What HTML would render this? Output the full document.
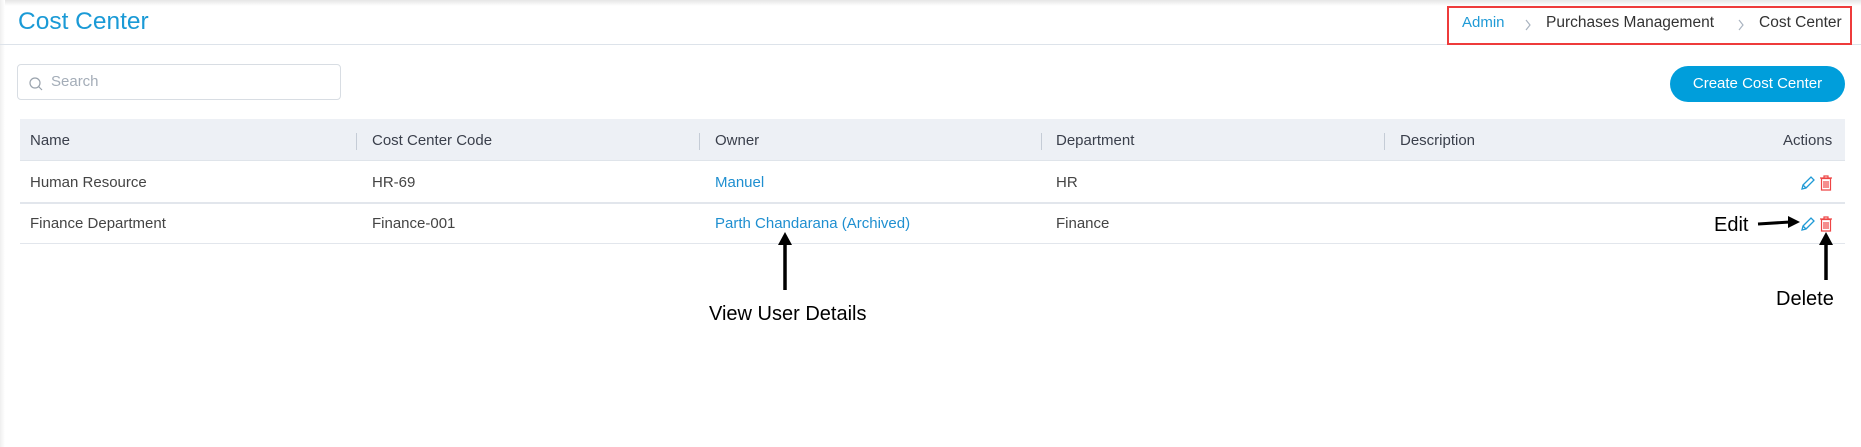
<!DOCTYPE html>
<html><head><meta charset="utf-8"><style>
*{margin:0;padding:0;box-sizing:border-box}
body{width:1861px;height:447px;background:#fff;font-family:"Liberation Sans",sans-serif;position:relative;overflow:hidden;color:#3a3f4b}
.a{position:absolute;white-space:nowrap}
.topsh{position:absolute;left:0;top:0;width:1861px;height:6px;background:linear-gradient(#e6e6e6,#fff)}
.leftsh{position:absolute;left:0;top:0;width:5px;height:447px;background:linear-gradient(90deg,#efefef,#fff)}
.th{font-size:15px;color:#3a3f4b}
.td{font-size:15px;color:#444}
.link{color:#1f8fd0}
.sep{position:absolute;top:133px;width:1px;height:17px;background:#c5ccd6}
.ann{font-size:20px;color:#000;font-weight:500}
</style></head><body>
<div class="topsh"></div><div class="leftsh"></div>
<div class="a" style="left:18px;top:8px;font-size:24.5px;color:#1a9ad6">Cost Center</div>
<div class="a" style="left:0;top:44px;width:1861px;height:1px;background:#dde3ea"></div>
<div class="a" style="left:1447px;top:6px;width:405px;height:39px;border:2px solid #ee3b3b"></div>
<div class="a" style="left:1462px;top:14px;font-size:15px;color:#1f9ad6">Admin</div>
<svg class="a" style="left:1524px;top:19px" width="8" height="12" viewBox="0 0 8 12"><path d="M2 1l4 5-4 5" fill="none" stroke="#a9b3c0" stroke-width="1.2"/></svg>
<div class="a" style="left:1546px;top:14px;font-size:15.5px;color:#333">Purchases Management</div>
<svg class="a" style="left:1737px;top:19px" width="8" height="12" viewBox="0 0 8 12"><path d="M2 1l4 5-4 5" fill="none" stroke="#a9b3c0" stroke-width="1.2"/></svg>
<div class="a" style="left:1759px;top:14px;font-size:15.5px;color:#333">Cost Center</div>

<div class="a" style="left:17px;top:64px;width:324px;height:36px;border:1px solid #d8dde3;border-radius:4px"></div>
<svg class="a" style="left:28px;top:76px" width="16" height="16" viewBox="0 0 16 16"><circle cx="7" cy="7" r="5" fill="none" stroke="#9aa3ad" stroke-width="1.2"/><path d="M10.5 10.5L14 14" stroke="#9aa3ad" stroke-width="1.2"/></svg>
<div class="a" style="left:51px;top:73px;font-size:15px;color:#a4adb8">Search</div>

<div class="a" style="left:1670px;top:66px;width:175px;height:36px;background:#009edb;border-radius:18px;color:#fff;font-size:15px;text-align:center;line-height:36px">Create Cost Center</div>

<div class="a" style="left:20px;top:119px;width:1825px;height:42px;background:#edf0f5;border-bottom:1px solid #dfe4ea"></div>
<div class="a th" style="left:30px;top:132px">Name</div>
<div class="a th" style="left:372px;top:132px">Cost Center Code</div>
<div class="a th" style="left:715px;top:132px">Owner</div>
<div class="a th" style="left:1056px;top:132px">Department</div>
<div class="a th" style="left:1400px;top:132px">Description</div>
<div class="a th" style="left:1783px;top:132px">Actions</div>
<div class="sep" style="left:356px"></div><div class="sep" style="left:699px"></div><div class="sep" style="left:1041px"></div><div class="sep" style="left:1384px"></div>

<div class="a td" style="left:30px;top:174px">Human Resource</div>
<div class="a td" style="left:372px;top:174px">HR-69</div>
<div class="a td link" style="left:715px;top:174px">Manuel</div>
<div class="a td" style="left:1056px;top:174px">HR</div>
<div class="a" style="left:20px;top:202px;width:1825px;height:2px;background:#e2e6ec"></div>
<div class="a td" style="left:30px;top:215px">Finance Department</div>
<div class="a td" style="left:372px;top:215px">Finance-001</div>
<div class="a td link" style="left:715px;top:215px">Parth Chandarana (Archived)</div>
<div class="a td" style="left:1056px;top:215px">Finance</div>
<div class="a" style="left:20px;top:243px;width:1825px;height:1px;background:#e2e6ec"></div>

<svg class="a" style="left:1800px;top:175px" width="16" height="16" viewBox="0 0 16 16"><path d="M2 14l1-4 8-8 3 3-8 8z M3 10l3 3" fill="none" stroke="#1f9ad6" stroke-width="1.3"/></svg>
<svg class="a" style="left:1819px;top:175px" width="14" height="16" viewBox="0 0 14 16"><path d="M1 3h12M5 3V1h4v2M2.5 3.5h9V15h-9z M5 6v7M7 6v7M9 6v7" fill="none" stroke="#ee4444" stroke-width="1.2"/></svg>
<svg class="a" style="left:1800px;top:216px" width="16" height="16" viewBox="0 0 16 16"><path d="M2 14l1-4 8-8 3 3-8 8z M3 10l3 3" fill="none" stroke="#1f9ad6" stroke-width="1.3"/></svg>
<svg class="a" style="left:1819px;top:216px" width="14" height="16" viewBox="0 0 14 16"><path d="M1 3h12M5 3V1h4v2M2.5 3.5h9V15h-9z M5 6v7M7 6v7M9 6v7" fill="none" stroke="#ee4444" stroke-width="1.2"/></svg>

<svg class="a" style="left:0;top:0" width="1861" height="447">
<path d="M1758 224L1790 222" stroke="#000" stroke-width="3"/><path d="M1788 216L1800 222L1788 228z" fill="#000"/>
<path d="M1826 280V243" stroke="#000" stroke-width="3.5"/><path d="M1819 245L1826 232L1833 245z" fill="#000"/>
<path d="M785 290V243" stroke="#000" stroke-width="3.5"/><path d="M778 245L785 232L792 245z" fill="#000"/>
</svg>
<div class="a ann" style="left:1714px;top:214px">Edit</div>
<div class="a ann" style="left:1776px;top:288px">Delete</div>
<div class="a ann" style="left:709px;top:303px">View User Details</div>
</body></html>
